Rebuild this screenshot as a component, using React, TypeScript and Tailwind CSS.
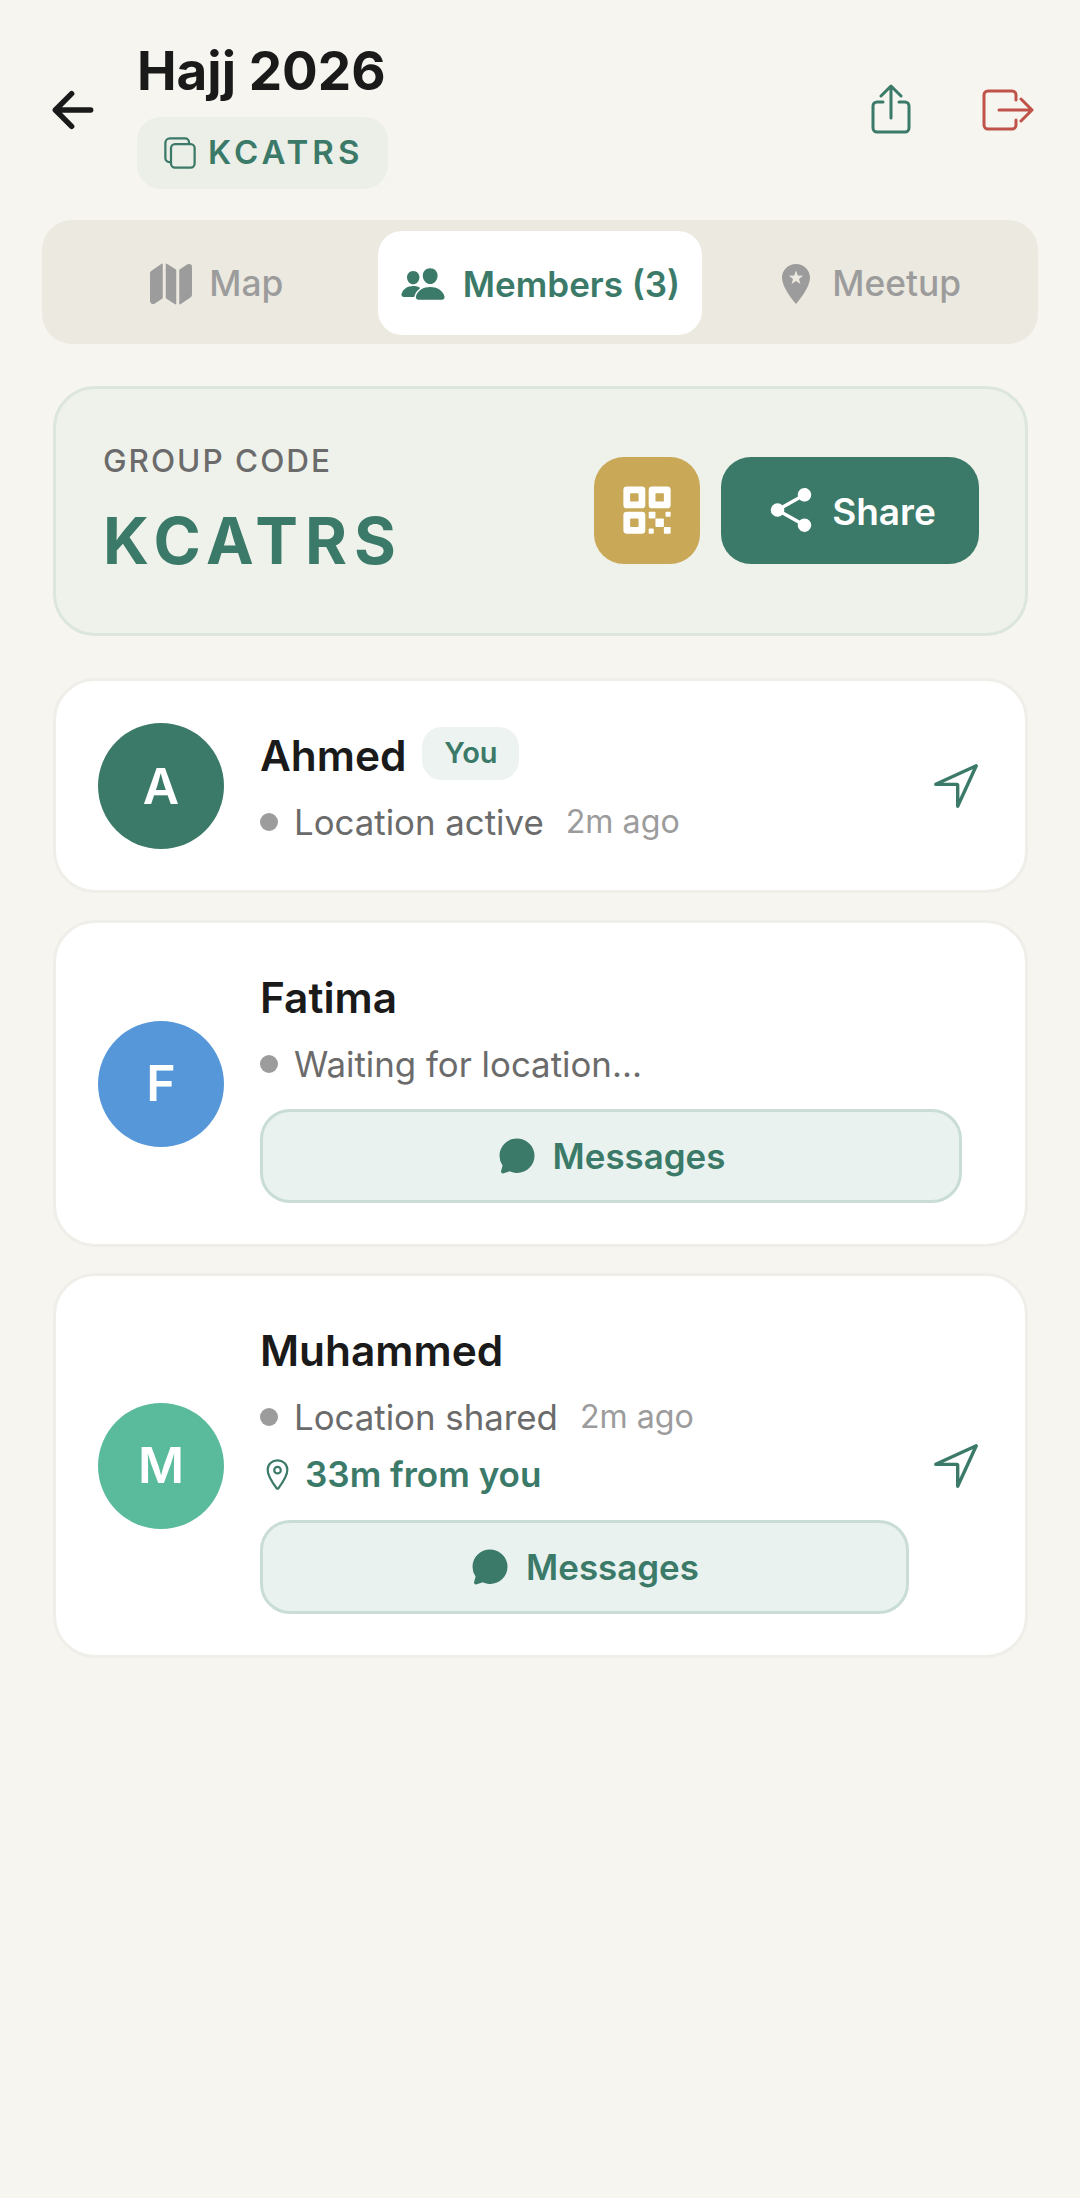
import { IoArrowBack, IoMap, IoPeople, IoQrCode, IoShareSocial, IoNavigateOutline, IoChatbubble, IoLocationOutline, IoCopyOutline } from "react-icons/io5";

const GREEN = "#3B7A68";

const MeetupIcon = () => (
  <svg width="28" height="40" viewBox="0 0 28 40" className="ml-[14px] mr-[5px] shrink-0">
    <path
      fillRule="evenodd"
      fill="#9C9C9C"
      d="M14 0C6.300 0 0 6 0 13.500 0 22 8 33 14 40c6-7 14-18 14-26.500C28 6 21.700 0 14 0zM14 6.500l1.800 5 5.300.2-4.100 3.300 1.400 5.100-4.400-3-4.400 3 1.400-5.100-4.100-3.300 5.300-.2z"
    />
  </svg>
);

const UploadIcon = () => (
  <svg width="40" height="50" viewBox="0 0 40 50" fill="none" stroke={GREEN} strokeWidth="3" strokeLinecap="round" strokeLinejoin="round">
    <path d="M12 18H6a4 4 0 0 0-4 4v22a4 4 0 0 0 4 4h28a4 4 0 0 0 4-4V22a4 4 0 0 0-4-4h-6" />
    <path d="M20 34V2M10 12 20 2l10 10" />
  </svg>
);

const LeaveIcon = () => (
  <svg width="52" height="42" viewBox="0 0 52 42" fill="none" stroke="#C0524A" strokeWidth="3" strokeLinecap="round" strokeLinejoin="round">
    <path d="M34 11V6a4 4 0 0 0-4-4H6a4 4 0 0 0-4 4v30a4 4 0 0 0 4 4h24a4 4 0 0 0 4-4v-5" />
    <path d="M17 21h33M39 10l11 11-11 11" />
  </svg>
);

const Tab = ({ icon, label, active, gap }: { icon: React.ReactNode; label: string; active?: boolean; gap: string }) => (
  <div className={`flex flex-1 items-center justify-center rounded-[24px] pt-[2px] ${gap} ${active ? "bg-white text-[35px] font-semibold text-[#3B7A68]" : "text-[35.300px] font-medium text-[#9C9C9C]"}`}>
    {icon}
    <span>{label}</span>
  </div>
);

const Status = ({ text, time }: { text: string; time?: string }) => (
  <div className="mt-[8px] flex h-[56px] items-center">
    <span className="h-[18px] w-[18px] rounded-full bg-[#9C9C9C]" />
    <span className="ml-[16px] text-[34.800px] text-[#6B6B6B]">{text}</span>
    {time && <span className="ml-[22px] text-[32.200px] text-[#9C9C9C]">{time}</span>}
  </div>
);

const MessagesButton = () => (
  <div className="flex h-[94px] items-center justify-center gap-[16px] rounded-[30px] border-[3px] border-[#C9DDD6] bg-[#E9F2EF] text-[34.900px] font-semibold text-[#3B7A68]">
    <IoChatbubble size={40} color={GREEN} />
    <span>Messages</span>
  </div>
);

const Avatar = ({ letter, color }: { letter: string; color: string }) => (
  <div className={`flex h-[126px] w-[126px] shrink-0 items-center justify-center rounded-full text-[50px] font-semibold text-white ${color}`}>
    {letter}
  </div>
);

const Nav = () => (
  <div className="ml-[19px] flex w-[60px] shrink-0 pl-[1px]">
    <IoNavigateOutline size={54} color={GREEN} />
  </div>
);

export default function App() {
  return (
    <div className="min-h-[2198px] bg-[#F6F5F0] font-['Inter',sans-serif]">
      <header className="flex h-[220px] items-start pl-[44px] pr-[46px]">
        <div className="mt-[81px] flex w-[93px] shrink-0">
          <IoArrowBack size={58} color="#1A1A1A" />
        </div>
        <div className="mt-[34px] flex flex-col items-start">
          <h1 className="text-[53px] font-bold leading-[75px] text-[#1A1A1A]">Hajj 2026</h1>
          <div className="mt-[8px] flex h-[72px] w-[251px] items-center gap-[10px] rounded-[24px] bg-[#EBEFE8] pl-[25px]">
            <IoCopyOutline size={36} color={GREEN} />
            <span className="text-[33px] font-semibold tracking-[4px] text-[#3B7A68]">KCATRS</span>
          </div>
        </div>
        <div className="ml-auto mt-[84px] flex items-start gap-[71px]">
          <UploadIcon />
          <div className="mt-[5px]">
            <LeaveIcon />
          </div>
        </div>
      </header>

      <nav className="mx-[42px] flex h-[124px] rounded-[30px] bg-[#ECE9E0] px-[11px] pb-[9px] pt-[11px]">
        <Tab gap="gap-[14px]" icon={<IoMap size={48} color="#9C9C9C" />} label="Map" />
        <Tab gap="gap-[17px]" active icon={<IoPeople size={46} color={GREEN} />} label="Members (3)" />
        <Tab gap="gap-[17px]" icon={<MeetupIcon />} label="Meetup" />
      </nav>

      <main className="ml-[53px] mr-[52px] mt-[42px] flex flex-col">
        <section className="flex h-[250px] items-center justify-between rounded-[42px] border-[3px] border-[#DCE6DF] bg-[#EFF2EB] pl-[47px] pr-[46px]">
          <div className="pt-[4px]">
            <div className="text-[31.500px] font-medium tracking-[2px] text-[#6B6B6B]">GROUP CODE</div>
            <div className="mt-[8px] text-[64px] font-bold tracking-[7px] text-[#3B7A68]">KCATRS</div>
          </div>
          <div className="mb-[2px] flex gap-[21px]">
            <div className="flex h-[107px] w-[106px] items-center justify-center rounded-[30px] bg-[#C9A857]">
              <IoQrCode size={54} color="#fff" />
            </div>
            <div className="flex h-[107px] w-[258px] items-center justify-center gap-[14px] rounded-[30px] bg-[#3B7A68] text-[37px] font-semibold text-white">
              <IoShareSocial size={54} color="#fff" />
              <span className="pt-[4px]">Share</span>
            </div>
          </div>
        </section>

        <article className="mt-[42px] flex items-center rounded-[42px] border-[3px] border-[#F0EEE8] bg-white pb-[40px] pl-[42px] pr-[37px] pt-[41px]">
          <Avatar letter="A" color="bg-[#3B7A68]" />
          <div className="ml-[36px] flex-1">
            <div className="flex h-[64px] items-center pt-[4px]">
              <span className="text-[42.400px] font-semibold text-[#1A1A1A]">Ahmed</span>
              <span className="-mt-[6px] ml-[16px] flex h-[53px] w-[97px] items-center justify-center rounded-[20px] bg-[#EDF3F0] text-[29px] font-semibold text-[#3B7A68]">You</span>
            </div>
            <Status text="Location active" time="2m ago" />
          </div>
          <Nav />
        </article>

        <article className="mt-[27px] flex items-center rounded-[42px] border-[3px] border-[#F0EEE8] bg-white pb-[41px] pl-[42px] pr-[37px] pt-[41px]">
          <Avatar letter="F" color="bg-[#5597D8]" />
          <div className="ml-[36px] mr-[26px] flex-1">
            <div className="flex h-[64px] items-center pt-[4px] text-[42.400px] font-semibold text-[#1A1A1A]">Fatima</div>
            <Status text="Waiting for location..." />
            <div className="mt-[17px]">
              <MessagesButton />
            </div>
          </div>
        </article>

        <article className="mt-[26px] flex items-center rounded-[42px] border-[3px] border-[#F0EEE8] bg-white pb-[41px] pl-[42px] pr-[37px] pt-[41px]">
          <Avatar letter="M" color="bg-[#5ABA9C]" />
          <div className="ml-[36px] flex-1">
            <div className="flex h-[64px] items-center pt-[4px] text-[42.400px] font-semibold text-[#1A1A1A]">Muhammed</div>
            <Status text="Location shared" time="2m ago" />
            <div className="mt-[1px] flex h-[56px] items-center gap-[10px] text-[35.100px] font-semibold text-[#3B7A68]">
              <IoLocationOutline size={35} color={GREEN} />
              <span>33m from you</span>
            </div>
            <div className="mt-[18px]">
              <MessagesButton />
            </div>
          </div>
          <Nav />
        </article>
      </main>
    </div>
  );
}
